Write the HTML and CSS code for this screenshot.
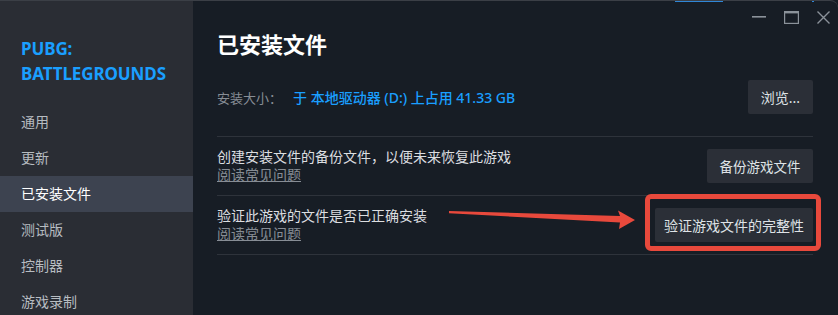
FILE: index.html
```html
<!DOCTYPE html>
<html lang="zh-CN">
<head>
<meta charset="utf-8">
<link rel="stylesheet" href="styles.css">
</head>
<body>
<div class="window">
  <div class="topline"><span class="blue-mark"></span><span class="blue-dot"></span></div>
  <aside class="sidebar">
    <div class="game-title">PUBG:<br>BATTLEGROUNDS</div>
    <nav class="nav">
      <div class="nav-item">通用</div>
      <div class="nav-item">更新</div>
      <div class="nav-item active">已安装文件</div>
      <div class="nav-item">测试版</div>
      <div class="nav-item">控制器</div>
      <div class="nav-item">游戏录制</div>
    </nav>
  </aside>
  <main class="main">
    <h1 class="page-title">已安装文件</h1>
    <div class="size-row">
      <div class="size-text"><span class="size-label">安装大小：</span><span class="size-value">于 本地驱动器 (D:) 上占用 41.33 GB</span></div>
      <button class="btn btn-browse">浏览...</button>
    </div>
    <div class="row">
      <div class="row-text">
        <div class="row-desc">创建安装文件的备份文件，以便未来恢复此游戏</div>
        <a class="faq">阅读常见问题</a>
      </div>
      <button class="btn btn-backup">备份游戏文件</button>
    </div>
    <div class="row">
      <div class="row-text">
        <div class="row-desc">验证此游戏的文件是否已正确安装</div>
        <a class="faq">阅读常见问题</a>
      </div>
      <button class="btn btn-verify">验证游戏文件的完整性</button>
    </div>
  </main>
  <div class="controls">
    <svg class="ctl" width="14" height="14" viewBox="0 0 14 14"><rect x="0" y="6" width="14" height="1.6" fill="#8b929a"/></svg>
    <svg class="ctl" width="15" height="13" viewBox="0 0 15 13"><rect x="0.6" y="0.6" width="13.8" height="11.8" fill="none" stroke="#8b929a" stroke-width="1.2"/><rect x="0" y="0" width="15" height="2.4" fill="#8b929a"/></svg>
    <svg class="ctl" width="13" height="13" viewBox="0 0 13 13"><path d="M0.5 0.5 L12.5 12.5 M12.5 0.5 L0.5 12.5" stroke="#8b929a" stroke-width="1.4"/></svg>
  </div>
  <svg class="arrow" width="838" height="315" viewBox="0 0 838 315"><polygon points="449,211 620,216 618,210.5 635,220 619,229 620,222.5 449,213.2" fill="#e8493c"/></svg>
  <div class="highlight"></div>
</div>
</body>
</html>
```
FILE: styles.css
```css
* { box-sizing: border-box; }
html, body { margin: 0; padding: 0; }
body {
  width: 838px;
  height: 315px;
  overflow: hidden;
  background: #171d25;
  font-family: "Noto Sans", "Noto Sans CJK SC", sans-serif;
}
.window {
  position: relative;
  display: flex;
  width: 838px;
  height: 315px;
  border-top: 1px solid #3b3f46;
  border-top-right-radius: 8px;
  overflow: hidden;
}
.topline { position: absolute; top: -1px; left: 0; width: 100%; height: 2px; }
.blue-mark { position: absolute; left: 675px; top: 0; width: 48px; height: 2px; background: #2f86d6; }
.blue-dot { position: absolute; left: 812px; top: 0; width: 2px; height: 2px; background: #2f86d6; }
.sidebar {
  width: 193px;
  flex: none;
  background: #2a2d34;
  padding-top: 35px;
}
.game-title {
  padding-left: 21px;
  font-size: 17px;
  line-height: 25px;
  font-weight: 700;
  color: #1a9fff;
  letter-spacing: -0.1px;
}
.nav { margin-top: 18px; }
.nav-item {
  height: 36px;
  line-height: 36px;
  padding-left: 21px;
  font-size: 14px;
  color: #b7bcc1;
}
.nav-item.active { background: #3d4350; color: #ffffff; }
.main {
  flex: 1;
  padding: 27px 25px 0 24px;
}
.page-title {
  margin: 0;
  font-size: 22px;
  line-height: 32px;
  font-weight: 700;
  color: #ffffff;
}
.size-row {
  display: flex;
  align-items: center;
  justify-content: space-between;
  margin-top: 20px;
  padding-bottom: 22px;
  border-bottom: 1px solid #2e333b;
}
.size-text { font-size: 13px; }
.size-label { color: #878d95; }
.size-value { color: #1a9fff; margin-left: 11px; font-size: 14px; font-weight: 500; }
.btn {
  height: 34px;
  padding: 0;
  border: none;
  border-radius: 2px;
  background: #2b2f37;
  color: #dfe3e6;
  font-family: "Noto Sans", "Noto Sans CJK SC", sans-serif;
  font-size: 14px;
  text-align: center;
}
.btn-browse { width: 65px; }
.btn-backup { width: 106px; font-size: 13.5px; }
.btn-verify { width: 158px; }
.row {
  display: flex;
  align-items: center;
  justify-content: space-between;
  padding: 12px 0;
  border-bottom: 1px solid #2e333b;
}
.row-text { display: flex; flex-direction: column; height: 34px; justify-content: center; }
.row-desc { font-size: 14px; line-height: 18px; color: #dcdee0; }
.faq {
  font-size: 14px;
  line-height: 18px;
  color: #878d95;
  text-decoration: underline;
  align-self: flex-start;
}
.controls {
  position: absolute;
  top: 9px;
  right: 8px;
  display: flex;
  align-items: center;
  gap: 18px;
}
.ctl { display: block; }
.arrow { position: absolute; left: 0; top: -1px; pointer-events: none; }
.highlight {
  position: absolute;
  left: 645px;
  top: 193px;
  width: 176px;
  height: 57px;
  border: 5px solid #e8493c;
  border-radius: 6px;
}
```
